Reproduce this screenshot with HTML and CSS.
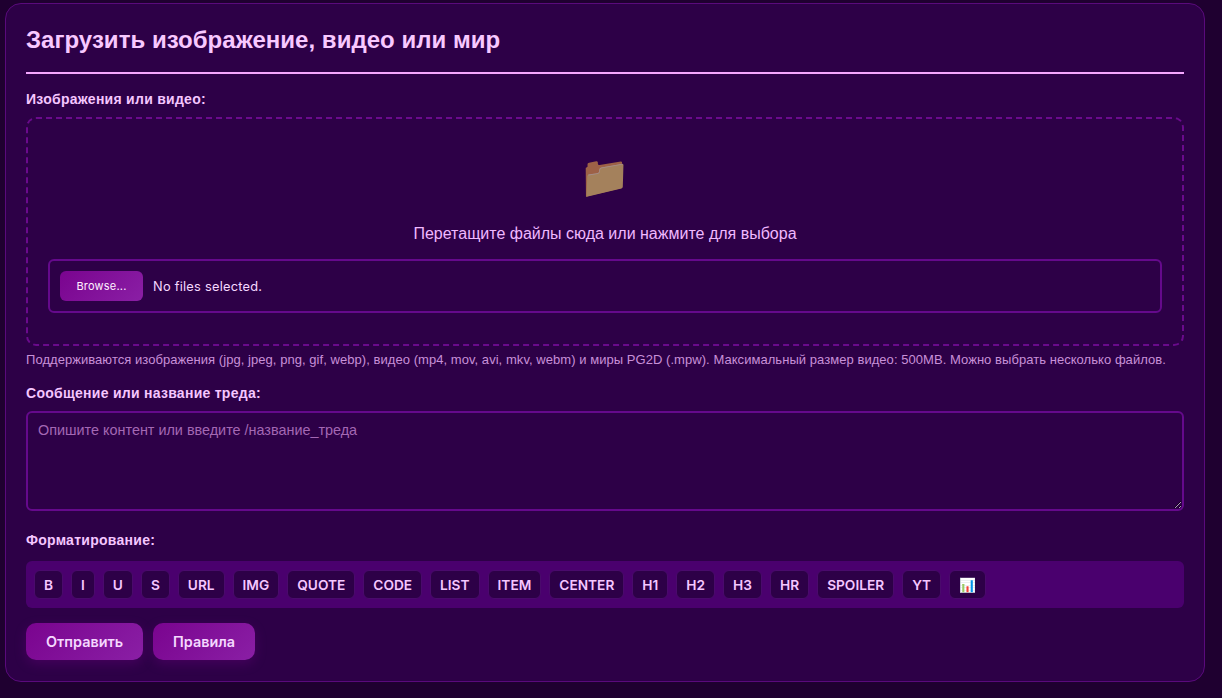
FILE: index.html
```html
<!DOCTYPE html>
<html lang="ru">
<head>
<meta charset="utf-8">
<title>Загрузить</title>
<link rel="stylesheet" href="styles.css">
</head>
<body>
<main class="card">
  <h2 class="title">Загрузить изображение, видео или мир</h2>
  <form class="form">
    <label class="label">Изображения или видео:</label>
    <div class="drop">
      <div class="drop-icon">📁</div>
      <p class="drop-text">Перетащите файлы сюда или нажмите для выбора</p>
      <div class="file-box">
        <span class="browse">Browse...</span>
        <span class="file-name">No files selected.</span>
      </div>
    </div>
    <p class="hint">Поддерживаются изображения (jpg, jpeg, png, gif, webp), видео (mp4, mov, avi, mkv, webm) и миры PG2D (.mpw). Максимальный размер видео: 500MB. Можно выбрать несколько файлов.</p>
    <label class="label label-message" for="msg">Сообщение или название треда:</label>
    <textarea class="message" id="msg" placeholder="Опишите контент или введите /название_треда"></textarea>
    <label class="label label-format">Форматирование:</label>
    <div class="toolbar">
      <button type="button" class="tool">B</button>
      <button type="button" class="tool">I</button>
      <button type="button" class="tool">U</button>
      <button type="button" class="tool">S</button>
      <button type="button" class="tool">URL</button>
      <button type="button" class="tool">IMG</button>
      <button type="button" class="tool">QUOTE</button>
      <button type="button" class="tool">CODE</button>
      <button type="button" class="tool">LIST</button>
      <button type="button" class="tool">ITEM</button>
      <button type="button" class="tool">CENTER</button>
      <button type="button" class="tool">H1</button>
      <button type="button" class="tool">H2</button>
      <button type="button" class="tool">H3</button>
      <button type="button" class="tool">HR</button>
      <button type="button" class="tool">SPOILER</button>
      <button type="button" class="tool">YT</button>
      <button type="button" class="tool">📊</button>
    </div>
    <div class="actions">
      <button type="button" class="action">Отправить</button>
      <button type="button" class="action">Правила</button>
    </div>
  </form>
</main>
</body>
</html>
```
FILE: styles.css
```css
* { box-sizing: border-box; }
html, body { height: 100%; }
body {
  margin: 0;
  padding: 3px 17px 0 5px;
  overflow: hidden;
  background: #1f0030;
  font-family: Inter, "Noto Color Emoji", sans-serif;
  color: #f5c6ff;
}
.card {
  height: 679px;
  padding: 20px;
  border: 1px solid #5a0a7c;
  border-radius: 16px;
  background: #2d0047;
}
.title {
  margin: 0 0 16px;
  padding: 1px 0 18px;
  border-bottom: 2px solid #f5a6ff;
  font: bold 24px/29px "Liberation Sans", sans-serif;
  letter-spacing: 0.03px;
  color: #f8c8ff;
}
.form { display: flex; flex-direction: column; }
.label {
  font: bold 14px/18px "Liberation Sans", sans-serif;
  letter-spacing: 0.27px;
  color: #f5c6ff;
}
.drop {
  margin-top: 9px;
  height: 229px;
  padding: 28px 20px 20px;
  border: 2px dashed #6a0a8c;
  border-radius: 10px;
  text-align: center;
}
.drop-icon { font-size: 41px; line-height: 58px; opacity: 0.57; }
.drop-text {
  margin: 19px 0 15px;
  font: 16px/20px "Liberation Sans", sans-serif;
  color: #f0b8ff;
}
.file-box {
  display: flex;
  align-items: center;
  gap: 10px;
  height: 54px;
  padding: 0 10px;
  border: 2px solid #65098c;
  border-radius: 6px;
  text-align: left;
}
.browse {
  display: flex;
  align-items: center;
  justify-content: center;
  width: 83px;
  height: 30px;
  border-radius: 6px;
  background: linear-gradient(135deg, #7a048f, #8a1fa5);
  font-size: 11px;
  letter-spacing: 0.2px;
  color: #fff0ff;
}
.file-name { font-size: 12.8px; letter-spacing: 0.25px; color: #f5d8ff; }
.hint {
  margin: 5px 0 0;
  font: 13px/17px "Liberation Sans", sans-serif;
  letter-spacing: 0.05px;
  color: #c890d8;
}
.label-message { margin-top: 16px; }
.message {
  display: block;
  width: 100%;
  height: 100px;
  margin-top: 9px;
  padding: 8px 10px;
  border: 2px solid #65098c;
  border-radius: 6px;
  background: #2d0047;
  font: 14.4px/18px "Liberation Sans", sans-serif;
  color: #f5c6ff;
}
.message::placeholder { color: #a468b4; opacity: 1; }
.label-format { margin-top: 20px; }
.toolbar {
  display: flex;
  gap: 8px;
  height: 47px;
  margin-top: 12px;
  padding: 9px 8px;
  border-radius: 6px;
  background: #4a006e;
}
.tool {
  padding: 0 9px;
  height: 29px;
  border: 1px solid #4a0a6c;
  border-radius: 6px;
  background: #2d0047;
  font: 600 13.7px Inter, "Noto Color Emoji", sans-serif;
  color: #f5c6ff;
}
.actions { display: flex; gap: 10px; margin-top: 15px; }
.action {
  height: 37px;
  padding: 0 20px;
  border: 0;
  border-radius: 10px;
  background: linear-gradient(135deg, #7a048f, #8a1fa5);
  box-shadow: 0 4px 12px rgba(122, 4, 143, 0.3);
  font: 600 14.4px Inter, sans-serif;
  color: #f5d8ff;
}
```
